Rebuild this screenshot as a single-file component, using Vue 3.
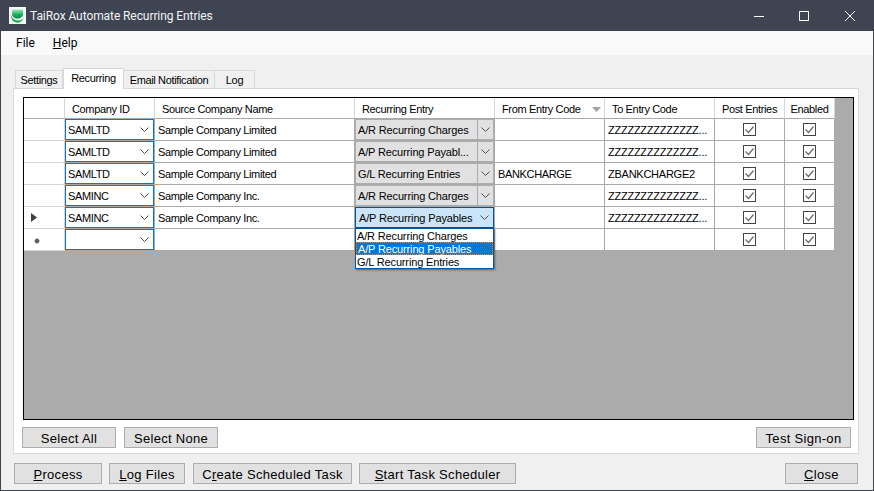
<script setup>
const columns = [
  { label: 'Company ID', cls: 'pad-7' },
  { label: 'Source Company Name', cls: 'pad-7' },
  { label: 'Recurring Entry', cls: 'pad-7' },
  { label: 'From Entry Code', cls: 'pad-7', sorted: true },
  { label: 'To Entry Code', cls: 'pad-7' },
  { label: 'Post Entries', cls: 'center' },
  { label: 'Enabled', cls: 'center' }
]
const rows = [
  { id: 'SAMLTD', name: 'Sample Company Limited', entry: 'A/R Recurring Charges', from: '', to: 'ZZZZZZZZZZZZZZ...' },
  { id: 'SAMLTD', name: 'Sample Company Limited', entry: 'A/P Recurring Payabl...', from: '', to: 'ZZZZZZZZZZZZZZ...' },
  { id: 'SAMLTD', name: 'Sample Company Limited', entry: 'G/L Recurring Entries', from: 'BANKCHARGE', to: 'ZBANKCHARGE2' },
  { id: 'SAMINC', name: 'Sample Company Inc.', entry: 'A/R Recurring Charges', from: '', to: 'ZZZZZZZZZZZZZZ...' },
  { id: 'SAMINC', name: 'Sample Company Inc.', entry: 'A/P Recurring Payables', from: '', to: 'ZZZZZZZZZZZZZZ...', current: true },
  { id: '', name: '', entry: '', from: '', to: '', isNew: true }
]
const options = ['A/R Recurring Charges', 'A/P Recurring Payables', 'G/L Recurring Entries']
</script>

<template>
  <div class="window">
    <header class="titlebar">
      <svg class="logo" width="17" height="17" viewBox="0 0 17 17">
        <defs>
          <linearGradient id="globe" x1="0" y1="0" x2="0" y2="1">
            <stop offset="0" stop-color="#a6e6bb" />
            <stop offset="0.55" stop-color="#19b25a" />
            <stop offset="1" stop-color="#0c8a44" />
          </linearGradient>
        </defs>
        <rect x="0" y="0" width="17" height="17" fill="#f4f8f5" />
        <path d="M3 2.500h11v4.500c0 3-3 4.600-5.500 4.600S3 10 3 7z" fill="url(#globe)" />
        <path d="M1.500 7.500c1.500 4.500 5 6.500 9 6 2-.3 3.500-1.300 4.500-2.700-1.500 3.700-4.500 5.200-7.500 4.700-3-.5-5.500-3.500-6-8z" fill="#14a04f" />
        <path d="M3 12.500c1.800 2.200 4.500 3.200 7.500 2.800" fill="none" stroke="#4cc27d" stroke-width="1" />
      </svg>
      <span class="title">TaiRox Automate Recurring Entries</span>
      <div class="controls">
        <svg width="12" height="12" viewBox="0 0 12 12" class="ctl-min"><path d="M1 6.500h10" stroke="#fff" /></svg>
        <svg width="12" height="12" viewBox="0 0 12 12" class="ctl-max"><rect x="1.500" y="1.500" width="9" height="9" fill="none" stroke="#fff" /></svg>
        <svg width="12" height="12" viewBox="0 0 12 12" class="ctl-close"><path d="M1 1l10 10M11 1L1 11" stroke="#fff" /></svg>
      </div>
    </header>

    <nav class="menubar">
      <span>File</span>
      <span><u>H</u>elp</span>
    </nav>

    <main class="body">
      <div class="tabs">
        <span class="tab tab-settings">Settings</span>
        <span class="tab active">Recurring</span>
        <span class="tab tab-email">Email Notification</span>
        <span class="tab tab-log">Log</span>
      </div>

      <section class="panel">
        <div class="grid">
          <div class="table">
            <div class="row head">
              <div class="cell rowhead"></div>
              <div v-for="c in columns" :key="c.label" class="cell" :class="c.cls">
                <span>{{ c.label }}</span>
                <svg v-if="c.sorted" class="sort" width="9" height="5" viewBox="0 0 9 5"><path d="M0 0h9L4.500 5z" fill="#a0a0a0" /></svg>
              </div>
            </div>
            <div v-for="(r, i) in rows" :key="i" class="row">
              <div class="cell rowhead">
                <svg v-if="r.current" class="arrow" width="6" height="9" viewBox="0 0 6 9"><path d="M0 0l6 4.500L0 9z" fill="#404040" /></svg>
                <svg v-if="r.isNew" class="star" width="6" height="6" viewBox="0 0 6 6"><circle cx="3" cy="3" r="2.200" fill="#505050" /><path d="M3 0v6M0 3h6" stroke="#707070" stroke-width=".7" /></svg>
              </div>
              <div class="cell combo-cell">
                <div class="combo blue">
                  <span>{{ r.id }}</span>
                  <svg class="chev" width="9" height="5" viewBox="0 0 9 5"><path d="M.5.5l4 4 4-4" fill="none" stroke="#505050" /></svg>
                </div>
              </div>
              <div class="cell text">{{ r.name }}</div>
              <div class="cell combo-cell">
                <div v-if="r.entry" class="combo entry" :class="r.current ? 'open' : 'gray'">
                  <span>{{ r.entry }}</span>
                  <svg class="chev" width="9" height="5" viewBox="0 0 9 5"><path d="M.5.5l4 4 4-4" fill="none" stroke="#505050" /></svg>
                </div>
              </div>
              <div class="cell text">{{ r.from }}</div>
              <div class="cell text code">{{ r.to }}</div>
              <div v-for="n in 2" :key="n" class="cell center">
                <svg width="13" height="13" viewBox="0 0 13 13"><rect x=".5" y=".5" width="12" height="12" fill="#fff" stroke="#444" /><path d="M2.500 6.500l3 3 5-6" fill="none" stroke="#6a6a6a" stroke-width="1.200" /></svg>
              </div>
            </div>
          </div>
          <ul class="dropdown">
            <li v-for="(o, i) in options" :key="o" :class="{ selected: i === 1 }">{{ o }}</li>
          </ul>
        </div>

        <div class="btnrow">
          <button class="btn w94">Select All</button>
          <button class="btn w94">Select None</button>
          <button class="btn w95 push">Test Sign-on</button>
        </div>
      </section>

      <footer class="actions">
        <button class="btn w88"><u>P</u>rocess</button>
        <button class="btn w76"><u>L</u>og Files</button>
        <button class="btn w159 gap8">C<u>r</u>eate Scheduled Task</button>
        <button class="btn w157"><u>S</u>tart Task Scheduler</button>
        <button class="btn w73 push"><u>C</u>lose</button>
      </footer>
    </main>
  </div>
</template>

<style>
html, body { margin: 0; }
</style>

<style scoped>
.window {
  width: 874px;
  height: 491px;
  box-sizing: border-box;
  display: flex;
  flex-direction: column;
  background: #f0f0f0;
  border: 1px solid #3e4452;
  border-top: 0;
  font-family: "Liberation Sans", Arial, sans-serif;
  font-size: 11px;
  letter-spacing: -0.35px;
  color: #000;
  overflow: hidden;
}
.titlebar {
  height: 31px;
  margin: 0 -1px;
  flex: none;
  background: #3e4452;
  color: #fff;
  display: flex;
  align-items: center;
  padding-left: 9px;
}
.logo { flex: none; }
.title {
  margin-left: 4px;
  font-family: Roboto, sans-serif;
  font-size: 12px;
  letter-spacing: -0.08px;
  color: #f2f3f5;
}
.controls { margin-left: auto; display: flex; align-items: center; }
.ctl-min { margin-right: 33px; }
.ctl-max { margin-right: 34px; }
.ctl-close { margin-right: 18px; }
.menubar {
  height: 24px;
  flex: none;
  background: #f9f9f9;
  display: flex;
  align-items: center;
  gap: 18px;
  padding-left: 15px;
  font-family: Roboto, sans-serif;
  font-size: 12px;
  letter-spacing: 0;
}
.body {
  flex: 1;
  display: flex;
  flex-direction: column;
  padding: 13px 14px 6px 12px;
  min-height: 0;
}
.tabs {
  height: 20px;
  display: flex;
  align-items: flex-start;
  padding-left: 2px;
  position: relative;
  z-index: 1;
  flex: none;
}
.tab {
  height: 18px;
  margin-top: 2px;
  box-sizing: border-box;
  border: 1px solid #d9d9d9;
  border-bottom: 0;
  border-left: 0;
  background: #f0f0f0;
  line-height: 18px;
  text-align: center;
}
.tab-settings { width: 48px; border-left: 1px solid #d9d9d9; }
.tab.active {
  width: 61px;
  height: 21px;
  margin-top: 0;
  background: #fff;
  border-left: 1px solid #d9d9d9;
  line-height: 19px;
}
.tab-email { width: 91px; border-left: 0; }
.tab-log { width: 40px; }
.panel {
  height: 366px;
  box-sizing: border-box;
  flex: none;
  background: #fff;
  border: 1px solid #d9d9d9;
  padding: 8px 4px 0 9px;
  display: flex;
  flex-direction: column;
}
.grid {
  position: relative;
  height: 323px;
  width: 831px;
  box-sizing: border-box;
  flex: none;
  border: 1px solid #000;
  background: #ababab;
}
.table { width: 811px; }
.row {
  display: grid;
  grid-template-columns: 41px 90px 200px 140px 110px 110px 70px 50px;
  height: 22px;
  background: #fff;
}
.row.head { height: 21px; }
.cell {
  box-sizing: border-box;
  border-right: 1px solid #a9a9a9;
  border-bottom: 1px solid #a9a9a9;
  display: flex;
  align-items: center;
  min-width: 0;
  white-space: nowrap;
  overflow: hidden;
}
.head .cell {
  border-color: #d6d6d6;
  border-bottom-color: #a9a9a9;
  padding-top: 2px;
}
.rowhead {
  position: relative;
  border-color: #d6d6d6;
  border-bottom-color: #d6d6d6;
}
.pad-7 { padding-left: 7px; }
.center { justify-content: center; }
.text { padding-left: 3px; }
.code { letter-spacing: -0.25px; }
.sort { margin-left: auto; margin-right: 3px; }
.arrow { margin-left: 7px; }
.star { margin-left: 10px; margin-top: 2px; }
.combo-cell { align-items: stretch; }
.combo {
  flex: 1;
  box-sizing: border-box;
  border: 1px solid;
  display: flex;
  align-items: center;
  padding-left: 2px;
  position: relative;
  min-width: 0;
}
.entry { letter-spacing: -0.15px; }
.combo.blue { border-color: #0078d7; background: #fff; }
.combo.gray { border-color: #adadad; background: #e1e1e1; }
.combo.open { border-color: #005499; background: #cce4f7; padding-left: 3px; }
.chev { position: absolute; right: 4px; top: 7px; }
.combo.gray::after {
  content: "";
  position: absolute;
  right: 15px;
  top: 0;
  bottom: 0;
  width: 1px;
  background: #adadad;
}
.combo.gray .chev { right: 3px; }
.dropdown {
  position: absolute;
  left: 331px;
  top: 130px;
  width: 139px;
  height: 41px;
  box-sizing: border-box;
  margin: 0;
  padding: 0;
  list-style: none;
  background: #fff;
  border: 1px solid #005499;
  box-shadow: 1px 1px 2px rgba(0, 0, 0, .45);
  letter-spacing: -0.15px;
}
.dropdown li {
  height: 13px;
  line-height: 15px;
  padding-left: 1px;
  box-sizing: border-box;
  white-space: nowrap;
}
.dropdown li.selected {
  background: #0078d7;
  color: #fff;
  outline: 1px dotted #e5853a;
  outline-offset: -1px;
  padding-left: 2px;
}
.btnrow, .actions { display: flex; flex: none; }
.btnrow { margin-top: 7px; margin-left: -1px; gap: 8px; padding-right: 3px; }
.actions { margin-top: 9px; margin-left: 1px; margin-right: 1px; gap: 7px; }
.btn {
  height: 21px;
  box-sizing: border-box;
  padding: 1px 0 0;
  background: #e1e1e1;
  border: 1px solid #adadad;
  font-family: "Liberation Sans", Arial, sans-serif;
  font-size: 13px;
  letter-spacing: 0.3px;
  color: #000;
  white-space: nowrap;
}
.push { margin-left: auto; }
.gap8 { margin-left: 1px; }
.w94 { width: 94px; }
.w95 { width: 95px; }
.w88 { width: 88px; }
.w76 { width: 76px; }
.w159 { width: 159px; }
.w157 { width: 157px; }
.w73 { width: 73px; }
</style>
